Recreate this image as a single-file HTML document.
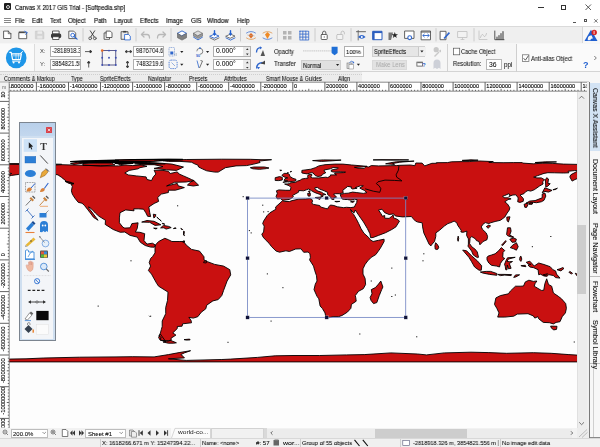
<!DOCTYPE html>
<html><head><meta charset="utf-8">
<style>
html,body{margin:0;padding:0;}
body{width:600px;height:447px;overflow:hidden;position:relative;background:#fff;-webkit-font-smoothing:antialiased;font-family:"Liberation Sans",sans-serif;color:#222;}
.a{position:absolute;}
.t{position:absolute;white-space:pre;line-height:1;}
.t,.it,.lb,.tb,.st,.vt{will-change:transform}
svg{position:absolute;overflow:visible;}
</style></head><body>
<!-- title bar -->
<div class="a" style="left:0;top:0;width:600px;height:14px;background:#fff"></div>
<div class="a" style="left:4px;top:3px;width:7px;height:7px;background:#1e1e1e;border-radius:1px"></div>
<div class="a" style="left:5.5px;top:4.5px;width:4px;height:4px;border:0.8px solid #ddd;border-radius:50%;box-sizing:border-box"></div>
<div class="t" style="left:15.2px;top:4.6px;font-size:6.6px;color:#000;transform:scaleX(0.9);transform-origin:0 0;-webkit-text-stroke:0.12px #000">Canvas X 2017 GIS Trial - [Softpedia.shp]</div>
<div class="a" style="left:538px;top:7px;width:6px;height:0.8px;background:#333"></div>
<div class="a" style="left:561px;top:4.5px;width:5px;height:5px;border:0.8px solid #333;box-sizing:border-box"></div>
<svg style="left:585px;top:4px" width="7" height="7"><path d="M0.5 0.5L6 6M6 0.5L0.5 6" stroke="#333" stroke-width="0.8"/></svg>
<!-- menu bar -->
<div class="a" style="left:4.2px;top:17.6px;width:6.6px;height:0.8px;background:#888;box-shadow:0 2px 0 #888,0 4px 0 #888"></div>
<div class="t" style="left:15.2px;top:17.8px;font-size:6.6px;color:#000;transform:scaleX(0.92);transform-origin:0 0;-webkit-text-stroke:0.12px #000">File</div>
<div class="t" style="left:32px;top:17.8px;font-size:6.6px;color:#000;transform:scaleX(0.92);transform-origin:0 0;-webkit-text-stroke:0.12px #000">Edit</div>
<div class="t" style="left:50.3px;top:17.8px;font-size:6.6px;color:#000;transform:scaleX(0.92);transform-origin:0 0;-webkit-text-stroke:0.12px #000">Text</div>
<div class="t" style="left:68.3px;top:17.8px;font-size:6.6px;color:#000;transform:scaleX(0.92);transform-origin:0 0;-webkit-text-stroke:0.12px #000">Object</div>
<div class="t" style="left:93.8px;top:17.8px;font-size:6.6px;color:#000;transform:scaleX(0.92);transform-origin:0 0;-webkit-text-stroke:0.12px #000">Path</div>
<div class="t" style="left:113.8px;top:17.8px;font-size:6.6px;color:#000;transform:scaleX(0.92);transform-origin:0 0;-webkit-text-stroke:0.12px #000">Layout</div>
<div class="t" style="left:140px;top:17.8px;font-size:6.6px;color:#000;transform:scaleX(0.92);transform-origin:0 0;-webkit-text-stroke:0.12px #000">Effects</div>
<div class="t" style="left:166px;top:17.8px;font-size:6.6px;color:#000;transform:scaleX(0.92);transform-origin:0 0;-webkit-text-stroke:0.12px #000">Image</div>
<div class="t" style="left:190.5px;top:17.8px;font-size:6.6px;color:#000;transform:scaleX(0.92);transform-origin:0 0;-webkit-text-stroke:0.12px #000">GIS</div>
<div class="t" style="left:206.5px;top:17.8px;font-size:6.6px;color:#000;transform:scaleX(0.92);transform-origin:0 0;-webkit-text-stroke:0.12px #000">Window</div>
<div class="t" style="left:236.5px;top:17.8px;font-size:6.6px;color:#000;transform:scaleX(0.92);transform-origin:0 0;-webkit-text-stroke:0.12px #000">Help</div>
<div class="a" style="left:572.5px;top:22px;width:3.5px;height:0.8px;background:#555"></div>
<div class="a" style="left:583.5px;top:18.5px;width:3.5px;height:3.5px;border:0.7px solid #555;box-sizing:border-box"></div>
<svg style="left:593.5px;top:18.5px" width="4" height="4"><path d="M0.2 0.2L3.6 3.6M3.6 0.2L0.2 3.6" stroke="#444" stroke-width="0.7"/></svg>
<!-- toolbar -->
<div class="a" style="left:0;top:25.5px;width:600px;height:18px;background:#efefef;border-top:1px solid #dadada;border-bottom:1px solid #d2d2d2;box-sizing:border-box"></div>
<div class="a" style="left:582px;top:26.5px;width:18px;height:16px;background:#f7f7f7;border-left:1px solid #d8d8d8;box-sizing:border-box"></div>
<svg style="left:0;top:0" width="600" height="50">
<g stroke-linejoin="round" stroke-linecap="round">
<!-- separators -->
<g stroke="#c4c4c4" stroke-width="0.8">
<path d="M83 28.5V41M136 28.5V41M171 28.5V41M240.5 28.5V41M277.5 28.5V41M315 28.5V41M351 28.5V41M436 28.5V41M474 28.5V41"/>
</g>
<!-- new doc -->
<g transform="translate(3.5,30.7)"><path d="M0.5 0.4H4.8L7.4 3V7.8H0.5Z" fill="#fff" stroke="#3d3d3d" stroke-width="0.8"/><path d="M4.8 0.4V3H7.4" fill="none" stroke="#3d3d3d" stroke-width="0.7"/></g>
<!-- new from template -->
<g transform="translate(18.7,30.7)"><path d="M0.5 2H8V8H0.5Z" fill="#fff" stroke="#3d3d3d" stroke-width="0.8"/><path d="M0.5 1.4H5.5" stroke="#3d3d3d" stroke-width="1.2"/><path d="M6 0.6L8.6 1.8L7 3.6" fill="none" stroke="#1f5fd0" stroke-width="0.9"/></g>
<!-- save disabled -->
<g transform="translate(35.5,30.8)"><path d="M0.3 0.3H7.2L8.3 1.4V8H0.3Z" fill="#d4d4d4" stroke="#c2c2c2" stroke-width="0.6"/><path d="M2 0.5H6.5V3H2Z" fill="#ececec"/><path d="M1.8 5H6.8V7.8H1.8Z" fill="#e8e8e8"/></g>
<!-- print -->
<g transform="translate(50.7,30.5)"><path d="M2.2 0.5H8.4V3.5H2.2Z" fill="#fff" stroke="#3a3a3a" stroke-width="0.8"/><rect x="0.3" y="3" width="10.2" height="4.6" rx="1.6" fill="#3a3a3a"/><path d="M2.3 6.2H8.3V9H2.3Z" fill="#fff" stroke="#3a3a3a" stroke-width="0.8"/></g>
<!-- print preview -->
<g transform="translate(68.7,30.7)"><path d="M0.5 0.4H5L7 2.4V7.9H0.5Z" fill="#fff" stroke="#3d3d3d" stroke-width="0.8"/><circle cx="4" cy="4.5" r="1.9" fill="#fff" stroke="#1f5fd0" stroke-width="0.9"/><path d="M5.4 5.9L8.4 8.4" stroke="#1f5fd0" stroke-width="1.2"/></g>
<!-- cut -->
<g transform="translate(88,30.5)"><path d="M2.3 0.3L6.3 6.5M6.7 0.3L2.7 6.5" stroke="#333" stroke-width="0.9"/><circle cx="2.2" cy="7.8" r="1.4" fill="none" stroke="#555" stroke-width="0.9"/><circle cx="6.8" cy="7.8" r="1.4" fill="none" stroke="#555" stroke-width="0.9"/></g>
<!-- copy -->
<g transform="translate(104,30.7)"><path d="M0.5 2.2H5.5V8.6H0.5Z" fill="#fff" stroke="#3d3d3d" stroke-width="0.8"/><path d="M2.5 0.4H6.3L8 2.1V6.8H2.5Z" fill="#fff" stroke="#3d3d3d" stroke-width="0.8"/></g>
<!-- paste -->
<g transform="translate(121,30.5)"><path d="M0.5 1.2H7V8.8H0.5Z" fill="#e8e8e8" stroke="#3d3d3d" stroke-width="0.8"/><path d="M2.2 0.4H5.3V2H2.2Z" fill="#3d3d3d"/><path d="M4 4H7.6L9.3 5.7V9.4H4Z" fill="#fff" stroke="#1f5fd0" stroke-width="0.8"/></g>
<!-- undo/redo grey -->
<g transform="translate(140.5,31)" fill="none" stroke="#b8b8b8" stroke-width="1.3"><path d="M1 3.5H6.5Q9 3.5 9 7"/><path d="M3.5 1L1 3.5L3.5 6"/></g>
<g transform="translate(156.5,31)" fill="none" stroke="#b8b8b8" stroke-width="1.3"><path d="M9 3.5H3.5Q1 3.5 1 7"/><path d="M6.5 1L9 3.5L6.5 6"/></g>
<!-- layers icons -->
<g transform="translate(177,30.5)"><path d="M0.5 2.8L5 0.4L9.5 2.8L5 5.2Z" fill="#fff" stroke="#2b63c8" stroke-width="0.9"/><path d="M0.5 3V7.2L5 9.6L9.5 7.2V3L5 5.4Z" fill="#808080" stroke="#5d5d5d" stroke-width="0.6"/></g>
<g transform="translate(193,30.5)"><path d="M0.5 2.8L5 0.4L9.5 2.8L5 5.2Z" fill="#ddd" stroke="#707070" stroke-width="0.7"/><path d="M0.5 3V5.5L5 8L9.5 5.5V3L5 5.4Z" fill="#9a9a9a" stroke="#6a6a6a" stroke-width="0.6"/><path d="M0.5 6.6L5 9.4L9.5 6.6" fill="none" stroke="#2b63c8" stroke-width="0.9"/></g>
<g transform="translate(209.5,30.5)"><path d="M0.5 5.6L5 3.6L9.5 5.6L5 7.6Z" fill="#fff" stroke="#2b63c8" stroke-width="0.9"/><path d="M0.5 7.4L5 9.6L9.5 7.4" fill="none" stroke="#555" stroke-width="0.8"/><path d="M5 0.3V4.6" stroke="#1f5fd0" stroke-width="1.4"/><path d="M3.2 2.8L5 4.9L6.8 2.8Z" fill="#1f5fd0"/></g>
<g transform="translate(225.5,30.5)"><path d="M0.5 5.6L5 3.6L9.5 5.6L5 7.6Z" fill="#fff" stroke="#555" stroke-width="0.8"/><path d="M0.5 7.4L5 9.6L9.5 7.4" fill="none" stroke="#2b63c8" stroke-width="0.9"/><path d="M5 0.3V4.6" stroke="#1f5fd0" stroke-width="1.4"/><path d="M3.2 2.8L5 4.9L6.8 2.8Z" fill="#1f5fd0"/></g>
<g transform="translate(246,30.5)"><path d="M0.5 2.5Q5 -0.5 9.5 2.5" fill="none" stroke="#5a86d6" stroke-width="0.9"/><path d="M0.5 7.5Q5 10.5 9.5 7.5" fill="none" stroke="#e0a060" stroke-width="0.9"/><path d="M5 2.5L7.5 5L5 8L2.5 5Z" fill="#e06a20"/><path d="M1.5 4.5L8.5 5.5" stroke="#aaa" stroke-width="0.5"/></g>
<g transform="translate(262.5,30.5)"><path d="M0.5 2.5Q5 -0.5 9.5 2.5" fill="none" stroke="#e0a060" stroke-width="0.9"/><path d="M0.5 7.5Q5 10.5 9.5 7.5" fill="none" stroke="#5a86d6" stroke-width="0.9"/><path d="M5 1.5L7.5 4L5 8.5L2.5 4Z" fill="#ef8a25"/></g>
<!-- grid icons -->
<g transform="translate(283,31)" fill="#b4b4b4"><rect x="0" y="0" width="3.5" height="3.5"/><rect x="5" y="0" width="3.5" height="3.5"/><rect x="0" y="5" width="3.5" height="3.5"/><rect x="5" y="5" width="3.5" height="3.5"/></g>
<g transform="translate(299.5,30.8)" fill="none" stroke="#2f66cc" stroke-width="0.8" stroke-dasharray="1.1 0.7"><rect x="0.4" y="0.4" width="8.8" height="8.8"/><path d="M3.3 0.4V9.2M6.3 0.4V9.2M0.4 3.3H9.2M0.4 6.3H9.2"/></g>
<!-- lock/unlock -->
<g transform="translate(320,30.5)"><path d="M2.5 4V2.6Q2.5 0.6 4.2 0.6Q5.9 0.6 5.9 2.6V4" fill="none" stroke="#555" stroke-width="0.9"/><rect x="1.2" y="4" width="6" height="5" rx="0.6" fill="#fff" stroke="#555" stroke-width="0.9"/><rect x="3.8" y="5.8" width="0.8" height="1.4" fill="#555"/></g>
<g transform="translate(336,30.5)"><path d="M5 4V2.6Q5 0.6 6.7 0.6Q8.4 0.6 8.4 2.6V3.4" fill="none" stroke="#bdbdbd" stroke-width="0.9"/><rect x="0.8" y="4" width="6" height="5" rx="0.6" fill="#f4f4f4" stroke="#bdbdbd" stroke-width="0.9"/></g>
<!-- eye with lines -->
<g transform="translate(356,30.5)"><path d="M0.5 1.2H9.5" stroke="#555" stroke-width="0.9"/><path d="M2.2 0V9.5" stroke="#555" stroke-width="0.8"/><path d="M2 6.4Q5.8 2.6 9.6 6.4Q5.8 10 2 6.4Z" fill="#2f66cc"/><circle cx="5.8" cy="6.4" r="1" fill="#fff"/></g>
<!-- window -->
<g transform="translate(372.5,30.8)"><rect x="0.5" y="0.5" width="9" height="8.4" fill="#fff" stroke="#2d5fbf" stroke-width="1"/><rect x="0.5" y="0.5" width="9" height="1.8" fill="#2d5fbf"/><rect x="0.5" y="0.5" width="1.6" height="8.4" fill="#2d5fbf"/></g>
<!-- star -->
<g transform="translate(388,30.5)"><path d="M0.5 2H5L3 9.5H0.5Z" fill="#777"/><path d="M6.8 1.5L7.6 3.8H10L8.1 5.2L8.8 7.5L6.8 6.1L4.8 7.5L5.5 5.2L3.6 3.8H6Z" fill="#222"/></g>
<!-- page gear -->
<g transform="translate(404.5,30.5)"><rect x="0.5" y="0.5" width="9" height="7.4" fill="#fff" stroke="#555" stroke-width="0.9"/><circle cx="5.2" cy="7.2" r="1.9" fill="#fff" stroke="#2f66cc" stroke-width="1.1"/></g>
<!-- arrows window -->
<g transform="translate(421,30.5)"><rect x="0.5" y="0.5" width="9" height="8.8" fill="#fff" stroke="#555" stroke-width="0.9"/><path d="M0.5 1.5H9.5" stroke="#555" stroke-width="1.2"/><path d="M2 5H8" stroke="#2f66cc" stroke-width="0.9"/><path d="M3.3 3.6L1.8 5L3.3 6.4M6.7 3.6L8.2 5L6.7 6.4" fill="none" stroke="#2f66cc" stroke-width="0.9"/></g>
<!-- page pen -->
<g transform="translate(440,30.5)"><path d="M0.5 0.8H6V9.2H0.5Z" fill="#fff" stroke="#555" stroke-width="0.9"/><path d="M3.5 7.5L8.8 1.5L10 2.7L4.7 8.5Z" fill="#2f66cc"/></g>
<!-- monitor grey -->
<g transform="translate(457.5,31)"><rect x="0.5" y="0.5" width="9" height="6" fill="#f2f2f2" stroke="#c4c4c4" stroke-width="0.9"/><path d="M3.5 8.5H6.5M5 6.5V8.5" stroke="#c4c4c4" stroke-width="0.8"/></g>
<!-- chart pen grey -->
<g transform="translate(478,30.5)"><path d="M1 0.5V9H9" fill="none" stroke="#c2c2c2" stroke-width="0.8"/><path d="M2.5 7Q4 2 5.5 5T8.5 3" fill="none" stroke="#c2c2c2" stroke-width="0.9"/></g>
<!-- bar chart -->
<g transform="translate(494,30.5)"><path d="M0.8 0.5V9.2H10" fill="none" stroke="#444" stroke-width="0.9"/><path d="M3 9V6.5M5 9V5M7 9V3M9 9V1" stroke="#444" stroke-width="1.1"/></g>
<!-- logo -->
<g transform="translate(584,29)"><path d="M0.5 12L7 0.8L13.5 12Z" fill="#1f5fd0"/><path d="M3.7 11.2Q3.5 6.5 7.5 6.3L9 9.5Q6.2 9.2 6.5 11.2Z" fill="#f7f7f7"/><circle cx="10.2" cy="3.5" r="2.7" fill="#d42020"/><path d="M10.1 2.2V4.8" stroke="#fff" stroke-width="0.8"/></g>
</g>
</svg>

<!-- property bar -->
<div class="a" style="left:0;top:43.3px;width:600px;height:28.6px;background:#f6f6f6;border-bottom:1px solid #d4d4d4;box-sizing:border-box"></div>
<style>
.inp{position:absolute;background:#fff;border:1px solid #b0b0b0;box-sizing:border-box;overflow:hidden}
.it{position:absolute;white-space:pre;line-height:1;font-size:6px;color:#000;transform-origin:0 0;-webkit-text-stroke:0.04px #000}
.lb{position:absolute;white-space:pre;line-height:1;font-size:6.3px;color:#111;transform-origin:0 0;-webkit-text-stroke:0.05px #000}
.dd{position:absolute;background:#e3e3e3;border:1px solid #cfcfcf;box-sizing:border-box}
</style>
<div class="a" style="left:0;top:43.8px;width:33.5px;height:27.3px;background:#fafafa"></div>
<div class="a" style="left:33.5px;top:44px;width:0.8px;height:27px;background:#dcdcdc"></div>
<div class="a" style="left:447px;top:44px;width:0.9px;height:27.5px;background:#d2d2d2"></div>
<div class="a" style="left:516.3px;top:44px;width:0.9px;height:27.5px;background:#cfcfcf"></div>
<div class="a" style="left:517.3px;top:43.8px;width:83px;height:27.3px;background:#fafafa"></div>
<svg style="left:0;top:0" width="600" height="75">
<circle cx="16.2" cy="57.9" r="10.3" fill="#1e96e8"/>
<g fill="none" stroke="#fff" stroke-linecap="round" stroke-linejoin="round">
<path d="M9.8 52.3H11.2L12.6 59.6H20.3L21.4 53.8H11.7" stroke-width="1.2"/>
<path d="M20.6 53.2L22.6 51.6" stroke-width="1"/>
<path d="M13.2 55.8H20.6M16 53.8V59.6M18.4 53.8V59.6" stroke-width="0.6"/>
<path d="M12.5 61.2H20.2" stroke-width="0.9"/>
</g>
<circle cx="13.6" cy="62.5" r="1" fill="#fff"/><circle cx="19" cy="62.5" r="1" fill="#fff"/>
<!-- arrows -->
<g stroke="#333" stroke-width="0.8" fill="#333">
<path d="M85 51.6H90.6" fill="none"/><path d="M90 50.3L92 51.6L90 52.9Z"/>
<path d="M88.7 67.5V62.5" fill="none"/><path d="M87.4 63L88.7 61L90 63Z"/>
<path d="M126.5 51.6H130.5" fill="none"/><path d="M126.8 50.4L125 51.6L126.8 52.8ZM130.2 50.4L132 51.6L130.2 52.8Z"/>
<path d="M127.5 62.5V66.5" fill="none"/><path d="M126.3 62.8L127.5 61L128.7 62.8ZM126.3 66.2L127.5 68L128.7 66.2Z"/>
</g>
<!-- ref point box -->
<rect x="102.2" y="50.6" width="13.6" height="14.4" fill="none" stroke="#2a2a6a" stroke-width="0.75"/>
<g fill="#3d4fb0">
<circle cx="109" cy="50.6" r="0.95"/><circle cx="115.8" cy="50.6" r="0.95"/>
<circle cx="102.2" cy="57.8" r="0.95"/><circle cx="109" cy="57.8" r="0.95"/><circle cx="115.8" cy="57.8" r="0.95"/>
<circle cx="102.2" cy="65" r="0.95"/><circle cx="109" cy="65" r="0.95"/><circle cx="115.8" cy="65" r="0.95"/>
</g>
<circle cx="102.2" cy="50.6" r="1.3" fill="#e8702a"/>
<!-- align icons -->
<g transform="translate(168.5,47)"><rect x="0.5" y="0.5" width="5.5" height="8.5" rx="0.5" fill="none" stroke="#6d8fd0" stroke-width="0.7" stroke-dasharray="1 0.6"/><rect x="1.8" y="4.5" width="3" height="3" fill="#2f66cc"/><path d="M6.5 6V9M8 6V9" stroke="#9ab" stroke-width="0.5"/></g>
<g transform="translate(168.5,59.5)"><rect x="0.6" y="0.6" width="8" height="8.5" rx="2" fill="none" stroke="#2f66cc" stroke-width="0.8" stroke-dasharray="1.4 0.8"/><path d="M3 3L6.5 6.5" stroke="#5580d0" stroke-width="0.6"/></g>
<g transform="translate(195.5,46.8)"><path d="M1.3 4.5A3 3 0 1 1 4.5 7.5" fill="none" stroke="#555" stroke-width="0.7"/><circle cx="4.5" cy="1.3" r="0.9" fill="#2f66cc"/><text x="0.5" y="9.8" font-size="3.6" fill="#2f66cc" font-family="Liberation Sans" font-weight="bold">90</text></g>
<g transform="translate(195.5,59.5)" fill="none" stroke-width="0.8"><path d="M1.5 1L3.5 8.5" stroke="#2f66cc"/><path d="M5 1L7 1.5L4 8.5" stroke="#555"/></g>
<g fill="#222"><path d="M180.2 51L183.4 51L181.8 52.9Z"/><path d="M180.2 63.8L183.4 63.8L181.8 65.7Z"/><path d="M206 51L209.2 51L207.6 52.9Z"/><path d="M206 63.8L209.2 63.8L207.6 65.7Z"/><path d="M356.8 63.8L360 63.8L358.4 65.7Z"/></g>
<!-- blue curved arrows -->
<g transform="translate(255.5,46.5)"><path d="M1 6Q1 1.5 5 1.2" fill="none" stroke="#2f66cc" stroke-width="1.3"/><path d="M4.4 -0.3L6.6 1.3L4.4 3Z" fill="#2f66cc"/><path d="M5 9.5L7.5 3.5L9.5 9.5Z" fill="#555"/></g>
<g transform="translate(255.5,59.5)"><path d="M1.2 9Q1 3.5 7 3" fill="none" stroke="#2f66cc" stroke-width="1.4"/><path d="M1.5 7.5L3 9.8L4.5 7.5Z" fill="#2f66cc"/><path d="M5 4L9.5 1V5Z" fill="#444"/></g>
<!-- slider -->
<path d="M303 50.8H333" stroke="#d0d0d0" stroke-width="1.2" stroke-dasharray="1.5 0.6"/>
<path d="M331.6 46.8H337.6V53L334.6 55.3L331.6 53Z" fill="#1f6fd6"/>
<!-- make lens misc icons -->
<g transform="translate(416.5,61.5)"><rect x="0.4" y="0.6" width="5.5" height="4" fill="#fff" stroke="#555" stroke-width="0.8"/><path d="M1 1.2H5.5" stroke="#555" stroke-width="0.8"/><text x="5.8" y="5.5" font-size="5.5" fill="#2f66cc" font-family="Liberation Sans" font-weight="bold">?</text></g>
<g transform="translate(432,46.5)" fill="#c9c9c9"><path d="M2 9.5L6.5 5L7.5 6L3 10.5Z"/><circle cx="4.2" cy="3.2" r="2.6"/><path d="M6.5 4.5L9 3V6Z"/></g>
<g transform="translate(432.5,59)"><path d="M1 10V4A3.5 3.5 0 0 1 8 4V10L6.5 8.8L4.5 10L2.5 8.8Z" fill="#cdd0d8"/></g>
<!-- checkboxes -->
<rect x="453.5" y="48.2" width="6.2" height="6.6" fill="#fff" stroke="#555" stroke-width="0.7"/>
<rect x="522.5" y="54.8" width="6.4" height="6.6" fill="#fff" stroke="#666" stroke-width="0.7"/>
<path d="M523.6 58.2L525.4 60.2L528.5 55.6" fill="none" stroke="#333" stroke-width="0.8"/>
<path d="M594.3 56L596.3 58L594.3 60" fill="none" stroke="#444" stroke-width="0.7"/>
</svg>
<!-- inputs -->
<div class="inp" style="left:49.8px;top:46px;width:31.5px;height:10.6px"><div class="it" style="left:1.4px;top:1.4px;font-size:6.8px;transform:scaleX(0.85)">-2818918.326</div></div>
<div class="inp" style="left:49.8px;top:59.2px;width:31.5px;height:10.4px"><div class="it" style="left:1.4px;top:1.3px;font-size:6.8px;transform:scaleX(0.85)">3854821.556</div></div>
<div class="inp" style="left:133.3px;top:46px;width:31px;height:10.6px"><div class="it" style="left:1.4px;top:1.4px;font-size:6.8px;transform:scaleX(0.85)">9876704.652</div></div>
<div class="inp" style="left:133.3px;top:59.2px;width:31px;height:10.4px"><div class="it" style="left:1.4px;top:1.3px;font-size:6.8px;transform:scaleX(0.85)">7483219.681</div></div>
<div class="inp" style="left:213.3px;top:46px;width:37.5px;height:10.6px;background:linear-gradient(90deg,#fff 80%,#eaeaea 80%)"><div class="it" style="left:1.6px;top:1.4px;font-size:6.8px;transform:scaleX(1.0)">0.000°</div></div>
<div class="inp" style="left:213.3px;top:59.2px;width:37.5px;height:10.4px;background:linear-gradient(90deg,#fff 80%,#eaeaea 80%)"><div class="it" style="left:1.6px;top:1.3px;font-size:6.8px;transform:scaleX(1.0)">0.000°</div></div>
<div class="inp" style="left:343.7px;top:46px;width:20px;height:10.6px"><div class="it" style="left:1.8px;top:2px;font-size:6.1px;transform:scaleX(0.95)">100%</div></div>
<div class="inp" style="left:485.8px;top:59.2px;width:16px;height:11px;border-color:#b8b8b8"><div class="it" style="left:2.4px;top:1.8px;font-size:6.8px">36</div></div>
<div class="dd" style="left:371.7px;top:46px;width:53.3px;height:10.7px;background:#e6e6e6"><div class="it" style="left:1.8px;top:1.6px;font-size:6.6px;transform:scaleX(0.86)">SpriteEffects</div><div class="a" style="left:45.5px;top:0;width:6.8px;height:8.7px;background:#f0f0f0;border-left:0.8px solid #c8c8c8"></div></div>
<div class="dd" style="left:300.8px;top:60px;width:40px;height:9.6px;background:#e1e1e1"><div class="it" style="left:1.6px;top:1.6px;font-size:6.3px;transform:scaleX(0.9)">Normal</div></div>
<div class="dd" style="left:371.7px;top:59.5px;width:35.8px;height:10px;background:#e2e2e2;border-color:#dadada"><div class="it" style="left:3.4px;top:1.6px;font-size:6.4px;color:#a8a8a8;-webkit-text-stroke:0;transform:scaleX(0.92)">Make Lens</div></div>
<svg style="left:0;top:0" width="600" height="75"><g fill="#222"><path d="M336 64L339.2 64L337.6 65.9Z"/><path d="M420.3 50.5L423.5 50.5L421.9 52.4Z"/></g></svg>
<!-- labels -->
<div class="lb" style="left:40.3px;top:48.8px;font-size:5.8px;color:#333;-webkit-text-stroke:0">X:</div>
<div class="lb" style="left:40.3px;top:61.8px;font-size:5.8px;color:#333;-webkit-text-stroke:0">Y:</div>
<div class="lb" style="left:274.2px;top:49px;transform:scaleX(0.92)">Opacity</div>
<div class="lb" style="left:274.2px;top:61px;transform:scaleX(0.95)">Transfer</div>
<div class="lb" style="left:461.3px;top:48.6px;transform:scaleX(0.9)">Cache Object</div>
<div class="lb" style="left:453px;top:61.3px;transform:scaleX(0.9)">Resolution:</div>
<div class="lb" style="left:504px;top:61.5px">ppi</div>
<div class="lb" style="left:530.5px;top:55.5px;transform:scaleX(0.9)">Anti-alias Object</div>
<div class="lb" style="left:583.3px;top:61px;font-size:9px;font-weight:bold;color:#1f5fd0;-webkit-text-stroke:0">?</div>
<svg style="left:0;top:0" width="600" height="75"><!-- spinners -->
<g fill="#333"><path d="M246 50L247.3 48.3L248.6 50Z"/><path d="M246 53.6L247.3 55.3L248.6 53.6Z"/><path d="M246 63.3L247.3 61.6L248.6 63.3Z"/><path d="M246 66.9L247.3 68.6L248.6 66.9Z"/></g>
</svg>
<svg style="left:0;top:0" width="600" height="75"><g transform="translate(346.5,60.5)"><rect x="0.5" y="2.5" width="5" height="5.5" fill="#ddd" stroke="#777" stroke-width="0.6"/><rect x="2.5" y="4" width="4.5" height="4.5" fill="#fff" stroke="#777" stroke-width="0.5"/><path d="M3 2Q5 -0.5 7.5 2" fill="none" stroke="#2f66cc" stroke-width="0.8"/><path d="M6.5 1L8 2.5L6.2 3Z" fill="#2f66cc"/></g></svg>

<!-- tabs -->
<div class="a" style="left:0;top:71.9px;width:600px;height:10.1px;background:#f7f7f7"></div>
<div class="a" style="left:0;top:71.9px;width:362px;height:10.1px;background:#ececec"></div>
<style>.tb{position:absolute;white-space:pre;line-height:1;font-size:6.4px;color:#000;transform-origin:0 0;transform:scaleX(0.845);top:75.8px;-webkit-text-stroke:0.05px #000}</style>
<div class="a" style="left:0;top:73.5px;width:362px;height:0;border-top:0.6px dotted #cfcfcf"></div>
<div class="tb" style="left:4px">Comments &amp; Markup</div>
<div class="tb" style="left:71px">Type</div>
<div class="tb" style="left:100px">SpriteEffects</div>
<div class="tb" style="left:148px">Navigator</div>
<div class="tb" style="left:189px">Presets</div>
<div class="tb" style="left:224px">Attributes</div>
<div class="tb" style="left:266px">Smart Mouse &amp; Guides</div>
<div class="tb" style="left:338px">Align</div>

<!-- canvas -->
<div class="a" style="left:9px;top:91px;width:568px;height:337px;background:#fdfdfd"></div>
<svg style="left:0;top:0" width="600" height="447">
<defs><clipPath id="cv"><rect x="9" y="91.5" width="568" height="337"/></clipPath></defs>
<g clip-path="url(#cv)">
<path d="M-6.1 167.6L-2.9 165.3L2.8 164.5L13.9 163.9L22.4 164.2L38.4 164.6L49.1 165.3L61.6 164.7L72.3 165.0L88.3 165.4L100.7 165.9L118.5 165.9L125.7 165.0L132.8 165.6L141.7 165.0L147.0 166.3L139.9 167.7L138.1 168.8L129.2 170.4L124.8 173.0L128.3 174.9L136.3 175.9L146.1 176.9L147.0 179.5L151.5 180.6L153.3 176.9L155.9 174.0L154.1 170.2L163.0 170.4L168.4 171.3L170.2 173.5L177.3 171.9L179.1 174.0L183.5 175.9L191.5 179.5L193.8 180.6L186.2 182.0L174.6 182.3L166.6 186.0L177.3 183.4L178.2 185.8L184.4 187.6L175.5 190.2L168.4 190.2L168.4 192.5L161.3 194.1L157.7 197.5L158.6 201.4L154.1 203.5L148.8 207.0L149.7 212.3L150.6 216.6L147.6 216.3L145.8 212.7L143.5 209.2L138.1 208.8L133.7 208.9L134.0 210.8L125.7 209.9L120.0 212.7L119.4 217.9L119.4 222.8L123.0 227.3L124.8 228.1L130.1 227.8L131.9 223.6L138.1 222.8L137.2 228.6L135.4 232.0L139.9 232.3L144.7 233.7L144.0 240.6L147.0 244.1L152.4 243.2L155.4 245.0L154.3 247.2L150.6 247.1L145.2 245.5L140.4 242.3L137.2 237.1L130.1 235.4L124.8 232.0L120.3 232.3L113.2 229.5L105.2 224.4L105.5 220.3L99.0 216.3L95.4 213.1L91.8 209.2L88.6 206.8L89.2 208.5L92.7 213.1L96.3 217.9L98.1 220.3L93.6 217.4L90.1 212.7L87.4 209.2L84.5 205.5L82.0 203.2L78.3 202.4L74.9 198.2L72.3 194.1L71.4 190.8L72.3 186.4L71.0 184.1L74.0 183.4L66.9 181.7L61.6 177.4L58.0 174.9L50.9 173.5L43.8 172.1L33.1 171.4L25.1 172.6L18.8 174.4L11.7 175.4L3.7 177.2L11.7 173.5L4.6 172.3L-0.7 171.3L0.2 169.6L6.4 168.4L-1.6 168.4ZM155.4 245.0L158.6 241.5L164.8 238.3L168.4 239.7L171.9 241.5L179.1 241.5L183.5 241.5L186.2 245.0L191.5 249.4L199.5 251.1L204.0 256.8L204.0 259.9L207.5 261.7L214.7 264.4L223.6 266.1L229.8 269.7L230.7 274.9L227.1 281.0L223.6 290.4L221.8 295.5L218.2 299.6L212.9 300.9L206.7 305.2L205.8 308.8L201.3 312.2L197.8 316.7L193.3 318.1L188.9 317.4L191.0 320.3L191.5 322.8L182.6 323.8L182.1 326.2L177.3 326.5L177.3 328.5L172.8 332.9L175.9 335.1L171.1 338.2L171.2 340.2L168.4 340.7L160.4 340.4L158.6 337.6L160.4 332.9L161.3 329.7L162.2 326.5L162.2 321.0L165.7 313.7L165.7 307.6L167.5 300.4L168.0 292.1L158.6 286.2L156.8 283.6L151.5 274.1L148.4 270.5L150.6 266.1L149.2 262.6L150.6 258.5L152.7 256.4L155.0 252.9L155.0 247.6ZM170.9 340.5L176.4 342.8L173.7 343.2L168.4 343.2L163.0 342.0L166.6 341.3ZM282.7 200.6L275.6 207.0L275.9 209.2L269.9 212.8L267.2 215.5L263.6 221.1L262.7 223.6L264.2 226.1L263.6 232.0L261.8 234.2L263.1 237.1L265.4 239.7L269.0 243.2L271.6 246.7L276.1 251.1L279.6 252.2L285.9 250.8L289.4 251.5L295.7 249.0L301.0 248.8L303.7 252.3L308.1 252.0L309.9 253.8L310.4 257.3L309.6 259.9L313.5 266.1L314.7 270.5L316.5 275.8L317.0 281.0L315.3 284.1L314.0 289.6L317.0 296.3L318.8 298.8L320.1 306.0L322.4 308.5L325.0 312.9L325.8 316.7L328.6 317.8L333.1 316.7L338.4 316.7L342.0 315.5L347.3 312.2L350.9 308.3L351.4 304.4L356.2 301.2L355.8 297.9L355.3 295.5L358.5 291.3L363.3 288.7L365.6 284.5L365.1 278.4L363.0 274.1L363.0 268.8L365.1 264.4L367.8 260.8L371.3 257.3L375.8 254.6L380.2 248.5L384.1 241.5L384.1 239.2L378.5 240.3L373.1 241.5L370.1 239.7L368.7 237.5L363.9 233.2L361.0 228.6L358.7 223.6L356.2 218.7L353.5 214.2L351.7 212.3L350.5 209.4L353.9 213.1L355.3 210.0L358.9 215.5L363.5 222.0L367.4 228.6L369.9 233.7L370.6 237.7L373.1 237.5L378.5 235.4L385.6 232.7L391.8 229.5L395.9 226.9L399.5 221.1L397.1 219.2L393.6 217.9L393.2 215.0L391.8 216.3L389.1 218.4L384.7 218.2L384.7 215.5L382.4 216.3L381.1 213.9L378.5 210.0L382.0 209.2L384.7 212.7L389.1 214.5L393.6 213.9L395.4 216.0L402.5 216.9L411.4 216.5L413.2 218.7L415.5 221.1L417.6 222.0L422.2 222.8L422.6 226.9L423.8 232.9L426.2 238.0L429.2 244.4L431.0 245.8L432.2 244.1L434.5 241.5L435.8 236.3L435.8 232.9L439.5 230.3L444.3 226.1L447.9 223.6L450.9 222.6L454.1 221.1L456.8 222.8L457.7 225.3L461.2 230.3L460.9 232.0L463.0 232.3L466.9 231.2L466.6 235.4L468.4 238.9L468.4 244.1L468.0 246.2L471.6 251.1L473.3 255.0L477.3 257.6L478.5 257.3L477.3 252.0L474.9 249.0L471.9 246.9L469.6 243.6L470.1 238.3L471.6 236.5L475.5 238.9L476.4 240.6L479.0 241.5L479.9 244.8L483.1 241.5L487.0 239.7L487.6 236.3L486.2 232.9L482.6 229.5L481.3 226.9L482.8 224.4L485.3 222.6L488.8 223.6L490.6 222.8L495.1 221.5L500.4 220.3L504.8 217.1L506.6 213.9L509.3 210.0L509.8 207.7L507.5 204.0L504.8 201.8L508.1 199.6L511.1 198.9L508.1 197.8L504.0 197.8L502.7 196.1L504.8 195.5L508.9 193.7L510.2 195.9L508.8 196.4L512.9 195.0L515.9 194.8L518.2 197.9L517.7 201.8L520.0 202.4L523.2 201.4L523.5 198.9L521.8 196.8L520.0 195.0L523.9 193.7L525.7 191.7L528.0 190.5L530.7 191.1L534.2 189.8L539.6 186.0L543.1 184.0L542.6 181.7L544.7 179.8L541.3 177.9L536.9 177.9L533.7 177.1L537.8 175.6L544.0 173.4L547.9 172.7L554.7 172.8L563.6 173.0L568.9 172.8L568.0 171.3L574.3 170.6L578.7 170.6L572.0 174.1L570.7 174.9L569.8 176.9L572.1 181.1L575.0 179.5L577.8 178.4L581.4 175.9L583.7 174.1L581.4 174.0L585.0 172.3L588.5 171.9L595.6 172.1L600.1 171.3L609.0 170.0L611.7 170.2L617.0 168.1L617.0 165.3L606.3 164.8L595.6 164.7L590.3 165.0L577.8 164.4L563.6 164.1L552.9 163.4L542.2 163.2L533.3 163.8L522.7 163.1L522.3 162.6L513.7 162.6L503.1 162.7L492.4 162.6L488.8 162.4L493.3 161.6L479.9 161.0L471.0 161.4L469.2 161.6L462.1 161.6L451.4 161.8L447.5 162.6L436.3 162.7L436.7 163.3L431.9 163.3L424.7 165.9L422.1 163.1L415.8 163.0L414.9 165.7L410.5 165.0L399.8 165.3L396.3 165.6L390.9 165.7L378.5 165.9L371.3 165.6L368.7 167.0L366.0 166.6L364.2 168.4L358.0 168.1L354.4 167.3L361.5 167.0L366.9 166.3L351.7 165.0L342.8 164.1L334.8 164.1L325.0 164.7L318.8 165.9L315.3 167.7L310.8 169.2L301.9 170.4L301.9 173.0L302.8 173.2L307.2 173.9L311.7 172.6L313.1 173.0L315.3 175.6L317.9 176.5L321.5 175.9L322.4 174.4L325.9 172.6L324.2 171.3L324.2 170.0L330.4 168.8L333.1 167.5L338.4 167.9L337.5 168.8L331.3 170.0L331.3 171.5L333.9 172.1L340.2 171.8L345.5 172.1L343.7 172.6L334.8 172.9L334.8 174.1L336.6 174.9L330.4 174.9L330.4 176.1L327.7 177.6L325.9 177.2L318.8 177.9L312.6 177.9L310.4 176.9L311.7 175.9L311.7 174.2L308.1 174.9L307.6 176.4L308.1 178.1L305.5 178.4L301.9 179.0L300.1 180.3L297.5 181.1L295.7 182.3L290.3 182.8L289.6 183.9L284.6 184.0L289.4 185.8L290.9 187.6L290.3 190.3L285.9 190.3L278.8 189.9L276.4 190.8L277.3 193.4L276.1 196.4L277.3 198.9L280.5 198.6L282.3 200.1L283.4 200.3L289.4 199.4L291.8 198.1L293.4 196.4L292.5 195.5L298.7 192.1L298.7 190.5L303.7 190.8L306.4 189.8L308.7 189.0L311.7 190.8L314.4 192.4L317.9 193.7L321.1 194.8L321.1 197.2L323.3 196.1L322.4 194.8L325.9 194.6L323.3 193.4L321.5 192.2L317.9 191.1L314.9 188.9L314.9 187.8L317.4 187.4L319.7 189.1L324.2 190.8L327.7 192.4L327.5 194.4L330.4 196.8L331.6 199.2L333.9 199.6L333.9 197.5L336.6 197.2L333.6 194.1L335.7 193.7L339.3 193.7L343.2 192.8L342.8 190.2L345.5 188.2L347.7 186.4L351.7 187.0L350.9 187.9L352.6 189.0L357.1 188.2L355.3 187.6L360.6 185.8L363.3 185.8L359.8 188.0L361.5 189.1L364.2 190.3L366.9 192.6L363.3 193.4L356.2 192.5L352.6 192.1L348.2 193.2L344.6 193.4L340.2 194.4L340.7 196.1L342.0 198.9L344.6 199.5L347.3 199.5L350.9 200.2L354.4 199.2L357.1 199.6L356.7 202.5L355.3 205.0L354.4 207.0L350.9 207.6L346.4 207.3L343.7 207.7L337.5 206.8L333.9 205.5L330.4 205.0L328.6 207.0L327.7 208.8L325.9 208.5L320.6 207.0L319.7 205.5L313.5 204.4L311.7 203.2L312.6 201.1L311.7 199.2L309.9 198.5L305.5 198.9L298.3 199.2L292.1 200.6L289.4 201.6L284.1 201.4ZM163.0 160.7L175.5 160.1L186.2 159.5L221.8 159.2L250.3 159.3L261.0 159.7L271.6 159.7L259.2 161.1L260.1 162.5L253.8 164.1L246.7 165.6L236.0 165.9L225.4 167.7L218.2 172.1L214.7 172.1L206.7 170.8L202.2 168.8L198.6 167.0L197.8 165.0L195.1 164.1L191.5 162.2L180.0 161.4L168.4 161.4ZM183.5 167.0L179.1 169.2L176.4 170.4L166.6 169.8L154.1 168.4L163.0 166.6L154.1 164.7L141.7 164.7L134.6 163.8L150.6 162.6L159.5 163.1L171.9 164.1ZM182.6 159.5L168.4 159.3L139.9 159.7L129.2 160.1L136.3 161.1L150.6 161.4L157.7 160.6L177.3 159.9ZM82.9 165.3L100.7 165.9L115.0 165.0L111.4 163.0L97.2 163.0L82.9 163.5ZM70.5 163.6L77.6 162.2L88.3 162.5L74.0 164.4ZM129.2 161.4L150.6 161.6L150.6 162.2L129.2 162.2ZM84.7 161.6L106.1 161.8L107.9 162.2L84.7 162.2ZM115.0 162.7L122.1 163.0L127.4 163.5L120.3 164.7ZM115.0 160.2L129.2 159.8L139.9 159.9L125.7 160.8ZM104.3 160.8L111.4 160.6L116.8 161.0L107.9 161.2ZM193.8 180.5L198.6 185.2L193.3 186.0L187.4 185.1L191.0 181.7ZM282.9 182.3L295.7 181.1L296.0 179.3L293.0 178.4L289.8 176.4L289.4 174.4L287.7 173.4L284.1 173.4L281.8 175.4L284.1 176.9L287.7 177.9L285.0 178.6L284.1 180.5L287.7 180.8ZM282.3 180.0L282.3 177.4L279.6 176.6L275.2 177.7L275.2 180.5L278.8 180.6ZM252.9 168.8L250.3 167.7L253.8 167.0L264.5 167.0L269.0 168.0L266.3 168.6L259.7 169.3ZM312.6 160.6L323.3 159.9L341.1 160.1L332.2 160.8L321.5 161.4ZM385.6 163.8L390.9 162.7L396.3 161.8L414.1 161.1L399.8 162.2L392.7 163.5L394.5 164.4ZM462.1 160.4L471.0 159.8L478.1 160.2L471.0 160.6ZM535.1 162.5L545.8 161.8L556.5 161.9L542.2 162.7ZM435.2 249.0L434.9 245.8L435.6 242.7L437.6 244.8L438.8 247.2L437.9 249.2L436.3 249.5ZM526.0 203.2L529.8 201.1L535.1 200.6L542.2 197.8L542.2 194.1L544.9 193.0L545.8 196.1L544.0 200.3L541.3 201.8L536.5 202.7L533.3 202.4L528.9 203.2ZM542.2 192.8L544.9 187.8L552.0 190.4L548.5 192.1L544.9 191.4ZM524.1 204.3L527.1 203.2L528.0 204.7L526.6 207.4L524.8 207.3ZM528.9 204.3L529.8 203.1L532.8 203.0L532.1 204.3ZM545.8 187.0L545.4 180.0L546.7 177.7L548.5 179.0L547.9 183.4L550.2 183.7L547.6 186.4ZM507.0 220.7L506.8 217.1L510.0 216.8L508.4 222.0ZM486.3 226.6L488.8 225.1L490.6 225.9L488.1 228.3ZM506.6 234.6L507.5 227.8L510.5 227.8L511.1 231.2L509.7 235.1L513.7 237.1L512.9 237.5L507.7 235.8ZM510.2 247.6L512.9 245.0L516.4 242.7L518.2 246.7L516.4 250.2L513.7 248.8ZM509.8 239.2L512.0 242.3L515.5 242.0L516.4 239.2L513.7 238.0ZM501.6 245.1L505.7 240.6L506.1 241.5L502.7 245.5ZM487.0 257.3L488.1 256.1L491.5 255.0L495.1 253.8L498.6 250.8L501.3 247.6L504.8 250.6L503.1 252.3L502.7 257.3L504.8 258.5L502.2 260.8L500.4 263.5L499.5 267.0L496.8 266.1L491.5 265.3L488.8 263.0L487.0 259.9ZM462.7 250.1L466.6 250.8L471.7 255.9L477.3 260.8L481.7 265.8L481.3 270.2L479.0 270.2L474.6 267.0L471.4 261.4L468.9 257.3ZM480.3 272.0L486.2 271.4L490.6 271.4L496.8 273.5L496.8 275.3L489.7 274.4L482.6 273.0ZM505.7 269.7L505.2 266.1L504.5 264.4L506.3 259.9L507.5 257.8L515.2 257.3L508.4 259.1L507.0 261.4L509.3 261.7L512.5 261.5L509.3 263.5L511.1 268.3L508.4 268.8L507.3 265.1L507.0 269.8ZM497.7 274.4L500.4 275.6L504.8 275.1L511.1 275.6L511.6 274.6L504.0 274.4ZM513.7 277.4L515.5 274.9L519.6 274.8L515.9 276.9ZM526.2 262.3L529.8 261.2L534.2 266.0L538.7 263.0L544.0 264.5L550.2 266.7L552.9 269.7L555.6 270.9L556.5 274.1L560.0 278.1L555.6 277.6L553.3 275.5L548.5 274.6L547.2 276.3L544.0 276.0L540.5 274.2L538.7 274.8L538.1 269.7L533.7 267.7L529.8 267.0L528.0 264.9L531.0 264.4L528.0 263.8ZM557.0 269.7L560.0 268.8L562.7 267.6L564.0 268.4L560.9 270.9ZM520.0 256.9L520.9 256.1L521.8 259.1L520.9 261.4L519.6 259.9ZM520.9 265.6L525.3 265.3L525.9 266.7L521.8 266.1ZM380.8 281.0L382.9 287.0L381.7 289.6L379.3 295.5L376.8 302.6L373.5 303.6L371.0 300.4L370.1 297.6L372.0 293.8L371.3 289.6L375.4 287.6L378.5 284.1ZM141.7 222.1L147.0 220.5L154.1 221.3L160.9 224.8L155.0 225.4L149.7 222.3ZM160.6 227.9L163.4 225.4L168.7 226.4L171.2 227.6L166.1 229.1L163.9 227.8ZM153.6 228.1L157.2 228.3L155.9 229.0ZM173.4 228.6L176.2 228.3L175.1 227.8ZM65.1 181.4L70.5 182.3L73.3 184.1L69.0 183.4ZM315.1 197.5L320.8 197.1L319.9 199.4ZM307.6 193.4L310.4 193.4L310.1 196.1L308.1 196.1ZM308.3 191.4L309.9 190.8L309.7 192.9ZM334.8 201.4L339.8 201.4L336.6 201.9ZM350.5 201.8L354.4 200.9L353.2 202.4ZM550.6 326.1L557.0 326.3L556.5 329.4L553.8 329.9L551.5 328.2ZM184.0 339.6L189.7 339.1L190.1 339.9L186.2 340.1ZM552.9 189.8L557.4 188.2L555.6 189.5ZM610.8 164.1L613.4 163.8L617.0 164.1ZM153.3 214.2L155.9 214.7L155.0 217.1L153.8 217.9ZM156.8 217.1L158.6 218.7L161.3 221.1L159.5 219.5ZM162.2 223.3L163.9 223.6L164.8 224.3L162.5 223.8ZM183.2 240.9L184.6 240.9L184.4 242.2L182.8 242.2ZM183.5 231.2L184.4 231.5L184.0 234.6L184.6 235.6L183.5 235.1ZM180.8 228.3L182.6 229.5L182.3 230.0ZM287.1 172.9L288.5 172.7L288.0 173.2ZM290.2 171.5L291.6 171.4L290.9 172.2ZM279.8 170.2L281.6 170.2L280.9 170.9ZM569.8 271.4L572.5 273.2L571.6 274.1L568.9 272.3ZM575.2 273.2L578.7 274.9L580.5 277.2L576.9 275.8ZM458.2 236.1L458.7 238.3L458.2 241.3L457.5 239.7L457.8 237.5ZM204.5 260.8L207.0 261.0L206.1 263.0L203.5 262.6ZM373.1 159.9L382.0 159.7L399.8 159.8L408.7 159.9L390.9 160.1ZM543.1 274.9L547.6 273.7L545.8 275.8ZM165.7 341.5L162.2 340.7L160.0 339.3L161.3 337.6L158.9 335.9L160.4 334.1ZM149.7 316.4L149.2 315.9ZM494.5 304.4L495.9 297.9L500.4 295.6L508.4 293.8L510.5 290.9L515.5 286.2L520.9 286.2L523.5 286.0L525.3 281.9L528.9 280.2L533.3 281.4L536.9 281.0L535.1 283.6L534.2 286.2L541.3 290.4L543.7 290.3L544.9 283.6L546.7 278.8L548.5 284.5L551.7 286.2L553.4 293.0L558.3 296.3L561.5 298.8L565.7 303.6L566.4 308.3L565.4 312.9L562.2 316.7L560.0 321.7L556.1 322.4L553.4 323.9L549.4 322.7L543.3 322.4L538.7 318.8L537.8 316.7L534.8 318.1L533.3 315.9L528.0 313.7L517.3 314.1L513.7 316.2L504.8 317.1L497.7 317.1L499.0 312.9L496.8 308.3ZM600.4 317.2L610.8 322.0L608.1 324.2L604.2 327.1L603.8 323.8L602.4 324.0ZM-27.4 361.9L-27.4 360.9L8.2 359.1L26.0 358.8L43.8 358.0L79.4 357.2L115.0 356.9L132.8 356.7L154.1 356.9L168.4 354.6L179.1 352.6L190.6 350.7L184.4 352.9L180.8 354.6L183.5 356.7L184.4 357.9L168.4 358.8L186.2 360.4L221.8 359.5L230.7 359.1L257.4 357.4L275.2 355.8L293.0 355.5L319.7 355.5L346.4 354.9L364.2 354.6L390.9 352.9L417.6 354.0L426.5 354.9L444.3 352.9L471.0 352.2L488.8 352.6L506.6 353.3L533.3 352.7L551.1 353.3L568.9 354.6L583.2 355.5L595.6 356.7L592.1 358.8L613.4 359.1L617.0 360.8L617.0 361.9Z" fill="#c91010" stroke="#000" stroke-width="0.9" stroke-linejoin="round"/>
<path d="M242.6 196.7h1.2M247.0 197.8h1.2M263.0 211.9h1.2M267.5 211.6h1.2M262.1 205.2h1.2M250.6 232.9h1.2M248.8 230.6h1.2M394.8 295.0h1.2M391.2 296.5h1.2M391.2 268.1h1.2M423.2 253.8h1.2M422.4 260.8h1.2M130.4 260.8h1.2M177.0 205.8h1.2M227.4 342.3h1.2M416.1 336.8h1.2M97.6 306.1h1.2M370.7 281.0h1.2M359.2 334.0h1.2M266.8 273.9h1.2M282.3 287.7h1.2M270.5 321.1h1.2M573.7 342.0h1.2M150.0 316.2h1.2M550.2 236.5h1.2M531.8 246.7h1.2M288.3 183.1h1.2M25.4 290.4h1.2M43.2 275.8h1.2" stroke="#000" stroke-width="0.9" fill="none"/>
<path d="M70.5 161.6L82.9 160.8L97.2 160.6L115.0 160.0L132.8 159.6L159.5 159.3L182.6 159.4L179.1 159.8L164.8 160.4L154.1 161.1L139.9 161.3L122.1 161.4L100.7 161.6L82.9 161.9ZM79.4 162.2L106.1 162.1L129.2 162.1L147.0 162.1L132.8 162.6L115.0 162.5L93.6 162.4ZM-6.1 163.8L8.2 164.0L26.0 164.1L43.8 164.4L61.6 164.2L43.8 164.0L17.1 163.7ZM88.3 161.1L106.1 160.8L118.5 160.6L104.3 160.7ZM159.5 160.2L171.9 159.9L182.6 159.7L168.4 160.0ZM139.9 163.5L154.1 163.2L164.8 164.0L150.6 164.0ZM115.0 163.5L123.9 163.1L132.8 163.4L122.1 163.8Z" fill="#b01010" stroke="#000" stroke-width="1.1" stroke-linejoin="round"/>
<path d="M399 165.5L398.4 170.2L396.1 174.8L396.7 177.2L400.2 179.5L401.9 180.9L394.3 180.4L385 180.1L378 181.8L376.3 183.6L379.2 185.9L380.9 188.8L379.8 192.3L373.3 191.2L365.2 188.8" fill="none" stroke="#000" stroke-width="0.9"/>
</g>
</svg>
<svg style="left:0;top:0" width="600" height="447">
<rect x="247.5" y="198.1" width="158.2" height="119.3" fill="none" stroke="#7588c4" stroke-width="0.85"/>
<g fill="#0f1238" stroke="#fff" stroke-width="0.35" stroke-opacity="0.6">
<rect x="245.8" y="196.3" width="3.5" height="3.5"/><rect x="324.9" y="196.3" width="3.5" height="3.5"/><rect x="404" y="196.3" width="3.5" height="3.5"/>
<rect x="245.8" y="256.4" width="3.5" height="3.5"/><rect x="404" y="256.4" width="3.5" height="3.5"/>
<rect x="245.8" y="315.7" width="3.5" height="3.5"/><rect x="324.9" y="315.7" width="3.5" height="3.5"/><rect x="404" y="315.7" width="3.5" height="3.5"/>
</g>
</svg>

<div class="a" style="left:0;top:82px;width:589px;height:9.5px;background:#fff"></div>
<div class="a" style="left:0;top:91px;width:9.3px;height:337px;background:#fff"></div>
<svg style="left:0;top:0;will-change:transform" width="600" height="447"><defs><clipPath id="hr"><rect x="9.5" y="82" width="577" height="9"/></clipPath><clipPath id="vr"><rect x="0" y="91.5" width="9" height="336"/></clipPath></defs><g clip-path="url(#hr)"><path d="M-27.7 82V91M-24.5 89.8V91M-21.3 89.8V91M-18.1 89.8V91M-14.9 89.8V91M-11.7 88.8V91M-8.5 89.8V91M-5.3 89.8V91M-2.1 89.8V91M1.1 89.8V91M4.4 82V91M7.6 89.8V91M10.8 89.8V91M14.0 89.8V91M17.2 89.8V91M20.4 88.8V91M23.6 89.8V91M26.8 89.8V91M30.0 89.8V91M33.2 89.8V91M36.4 82V91M39.6 89.8V91M42.8 89.8V91M46.0 89.8V91M49.2 89.8V91M52.4 88.8V91M55.6 89.8V91M58.8 89.8V91M62.0 89.8V91M65.2 89.8V91M68.5 82V91M71.7 89.8V91M74.9 89.8V91M78.1 89.8V91M81.3 89.8V91M84.5 88.8V91M87.7 89.8V91M90.9 89.8V91M94.1 89.8V91M97.3 89.8V91M100.5 82V91M103.7 89.8V91M106.9 89.8V91M110.1 89.8V91M113.3 89.8V91M116.5 88.8V91M119.7 89.8V91M122.9 89.8V91M126.1 89.8V91M129.3 89.8V91M132.6 82V91M135.8 89.8V91M139.0 89.8V91M142.2 89.8V91M145.4 89.8V91M148.6 88.8V91M151.8 89.8V91M155.0 89.8V91M158.2 89.8V91M161.4 89.8V91M164.6 82V91M167.8 89.8V91M171.0 89.8V91M174.2 89.8V91M177.4 89.8V91M180.6 88.8V91M183.8 89.8V91M187.0 89.8V91M190.2 89.8V91M193.4 89.8V91M196.7 82V91M199.9 89.8V91M203.1 89.8V91M206.3 89.8V91M209.5 89.8V91M212.7 88.8V91M215.9 89.8V91M219.1 89.8V91M222.3 89.8V91M225.5 89.8V91M228.7 82V91M231.9 89.8V91M235.1 89.8V91M238.3 89.8V91M241.5 89.8V91M244.7 88.8V91M247.9 89.8V91M251.1 89.8V91M254.3 89.8V91M257.5 89.8V91M260.8 82V91M264.0 89.8V91M267.2 89.8V91M270.4 89.8V91M273.6 89.8V91M276.8 88.8V91M280.0 89.8V91M283.2 89.8V91M286.4 89.8V91M289.6 89.8V91M292.8 82V91M296.0 89.8V91M299.2 89.8V91M302.4 89.8V91M305.6 89.8V91M308.8 88.8V91M312.0 89.8V91M315.2 89.8V91M318.4 89.8V91M321.6 89.8V91M324.9 82V91M328.1 89.8V91M331.3 89.8V91M334.5 89.8V91M337.7 89.8V91M340.9 88.8V91M344.1 89.8V91M347.3 89.8V91M350.5 89.8V91M353.7 89.8V91M356.9 82V91M360.1 89.8V91M363.3 89.8V91M366.5 89.8V91M369.7 89.8V91M372.9 88.8V91M376.1 89.8V91M379.3 89.8V91M382.5 89.8V91M385.7 89.8V91M388.9 82V91M392.2 89.8V91M395.4 89.8V91M398.6 89.8V91M401.8 89.8V91M405.0 88.8V91M408.2 89.8V91M411.4 89.8V91M414.6 89.8V91M417.8 89.8V91M421.0 82V91M424.2 89.8V91M427.4 89.8V91M430.6 89.8V91M433.8 89.8V91M437.0 88.8V91M440.2 89.8V91M443.4 89.8V91M446.6 89.8V91M449.8 89.8V91M453.1 82V91M456.3 89.8V91M459.5 89.8V91M462.7 89.8V91M465.9 89.8V91M469.1 88.8V91M472.3 89.8V91M475.5 89.8V91M478.7 89.8V91M481.9 89.8V91M485.1 82V91M488.3 89.8V91M491.5 89.8V91M494.7 89.8V91M497.9 89.8V91M501.1 88.8V91M504.3 89.8V91M507.5 89.8V91M510.7 89.8V91M513.9 89.8V91M517.1 82V91M520.4 89.8V91M523.6 89.8V91M526.8 89.8V91M530.0 89.8V91M533.2 88.8V91M536.4 89.8V91M539.6 89.8V91M542.8 89.8V91M546.0 89.8V91M549.2 82V91M552.4 89.8V91M555.6 89.8V91M558.8 89.8V91M562.0 89.8V91M565.2 88.8V91M568.4 89.8V91M571.6 89.8V91M574.8 89.8V91M578.0 89.8V91M581.2 82V91M584.5 89.8V91M587.7 89.8V91M590.9 89.8V91M594.1 89.8V91M597.3 88.8V91M600.5 89.8V91M603.7 89.8V91M606.9 89.8V91M610.1 89.8V91M613.3 82V91M616.5 89.8V91M619.7 89.8V91M622.9 89.8V91M626.1 89.8V91M629.3 88.8V91M632.5 89.8V91M635.7 89.8V91M638.9 89.8V91M642.1 89.8V91" stroke="#222" stroke-width="0.7"/><text x="-26.5" y="88.2" font-size="5.8" font-family="Liberation Sans" fill="#000" stroke="#000" stroke-width="0.12" textLength="27.9" lengthAdjust="spacingAndGlyphs">-20000000</text><text x="5.6" y="88.2" font-size="5.8" font-family="Liberation Sans" fill="#000" stroke="#000" stroke-width="0.12" textLength="27.9" lengthAdjust="spacingAndGlyphs">-18000000</text><text x="37.6" y="88.2" font-size="5.8" font-family="Liberation Sans" fill="#000" stroke="#000" stroke-width="0.12" textLength="27.9" lengthAdjust="spacingAndGlyphs">-16000000</text><text x="69.7" y="88.2" font-size="5.8" font-family="Liberation Sans" fill="#000" stroke="#000" stroke-width="0.12" textLength="27.9" lengthAdjust="spacingAndGlyphs">-14000000</text><text x="101.7" y="88.2" font-size="5.8" font-family="Liberation Sans" fill="#000" stroke="#000" stroke-width="0.12" textLength="27.9" lengthAdjust="spacingAndGlyphs">-12000000</text><text x="133.8" y="88.2" font-size="5.8" font-family="Liberation Sans" fill="#000" stroke="#000" stroke-width="0.12" textLength="27.9" lengthAdjust="spacingAndGlyphs">-10000000</text><text x="165.8" y="88.2" font-size="5.8" font-family="Liberation Sans" fill="#000" stroke="#000" stroke-width="0.12" textLength="24.8" lengthAdjust="spacingAndGlyphs">-8000000</text><text x="197.9" y="88.2" font-size="5.8" font-family="Liberation Sans" fill="#000" stroke="#000" stroke-width="0.12" textLength="24.8" lengthAdjust="spacingAndGlyphs">-6000000</text><text x="229.9" y="88.2" font-size="5.8" font-family="Liberation Sans" fill="#000" stroke="#000" stroke-width="0.12" textLength="24.8" lengthAdjust="spacingAndGlyphs">-4000000</text><text x="261.9" y="88.2" font-size="5.8" font-family="Liberation Sans" fill="#000" stroke="#000" stroke-width="0.12" textLength="24.8" lengthAdjust="spacingAndGlyphs">-2000000</text><text x="294.0" y="88.2" font-size="5.8" font-family="Liberation Sans" fill="#000" stroke="#000" stroke-width="0.12" textLength="3.1" lengthAdjust="spacingAndGlyphs">0</text><text x="326.1" y="88.2" font-size="5.8" font-family="Liberation Sans" fill="#000" stroke="#000" stroke-width="0.12" textLength="21.7" lengthAdjust="spacingAndGlyphs">2000000</text><text x="358.1" y="88.2" font-size="5.8" font-family="Liberation Sans" fill="#000" stroke="#000" stroke-width="0.12" textLength="21.7" lengthAdjust="spacingAndGlyphs">4000000</text><text x="390.1" y="88.2" font-size="5.8" font-family="Liberation Sans" fill="#000" stroke="#000" stroke-width="0.12" textLength="21.7" lengthAdjust="spacingAndGlyphs">6000000</text><text x="422.2" y="88.2" font-size="5.8" font-family="Liberation Sans" fill="#000" stroke="#000" stroke-width="0.12" textLength="21.7" lengthAdjust="spacingAndGlyphs">8000000</text><text x="454.2" y="88.2" font-size="5.8" font-family="Liberation Sans" fill="#000" stroke="#000" stroke-width="0.12" textLength="24.8" lengthAdjust="spacingAndGlyphs">10000000</text><text x="486.3" y="88.2" font-size="5.8" font-family="Liberation Sans" fill="#000" stroke="#000" stroke-width="0.12" textLength="24.8" lengthAdjust="spacingAndGlyphs">12000000</text><text x="518.4" y="88.2" font-size="5.8" font-family="Liberation Sans" fill="#000" stroke="#000" stroke-width="0.12" textLength="24.8" lengthAdjust="spacingAndGlyphs">14000000</text><text x="550.4" y="88.2" font-size="5.8" font-family="Liberation Sans" fill="#000" stroke="#000" stroke-width="0.12" textLength="24.8" lengthAdjust="spacingAndGlyphs">16000000</text><text x="582.5" y="88.2" font-size="5.8" font-family="Liberation Sans" fill="#000" stroke="#000" stroke-width="0.12" textLength="24.8" lengthAdjust="spacingAndGlyphs">18000000</text><text x="614.5" y="88.2" font-size="5.8" font-family="Liberation Sans" fill="#000" stroke="#000" stroke-width="0.12" textLength="24.8" lengthAdjust="spacingAndGlyphs">20000000</text></g><path d="M0 82.2H589M9 91.2H589" stroke="#6a6a6a" stroke-width="0.8"/><rect x="0" y="82.5" width="9" height="8.5" fill="#f2f2f2"/><text x="2.2" y="88.5" font-size="4.5" font-family="Liberation Sans" fill="#555">m</text><g clip-path="url(#vr)"><path d="M0 450.1H9M7.8 446.9H9M7.8 443.8H9M7.8 440.6H9M7.8 437.4H9M6.8 434.2H9M7.8 431.1H9M7.8 427.9H9M7.8 424.7H9M7.8 421.6H9M0 418.4H9M7.8 415.2H9M7.8 412.1H9M7.8 408.9H9M7.8 405.7H9M6.8 402.5H9M7.8 399.4H9M7.8 396.2H9M7.8 393.0H9M7.8 389.9H9M0 386.7H9M7.8 383.5H9M7.8 380.4H9M7.8 377.2H9M7.8 374.0H9M6.8 370.8H9M7.8 367.7H9M7.8 364.5H9M7.8 361.3H9M7.8 358.2H9M0 355.0H9M7.8 351.8H9M7.8 348.7H9M7.8 345.5H9M7.8 342.3H9M6.8 339.1H9M7.8 336.0H9M7.8 332.8H9M7.8 329.6H9M7.8 326.5H9M0 323.3H9M7.8 320.1H9M7.8 317.0H9M7.8 313.8H9M7.8 310.6H9M6.8 307.4H9M7.8 304.3H9M7.8 301.1H9M7.8 297.9H9M7.8 294.8H9M0 291.6H9M7.8 288.4H9M7.8 285.3H9M7.8 282.1H9M7.8 278.9H9M6.8 275.7H9M7.8 272.6H9M7.8 269.4H9M7.8 266.2H9M7.8 263.1H9M0 259.9H9M7.8 256.7H9M7.8 253.6H9M7.8 250.4H9M7.8 247.2H9M6.8 244.0H9M7.8 240.9H9M7.8 237.7H9M7.8 234.5H9M7.8 231.4H9M0 228.2H9M7.8 225.0H9M7.8 221.9H9M7.8 218.7H9M7.8 215.5H9M6.8 212.3H9M7.8 209.2H9M7.8 206.0H9M7.8 202.8H9M7.8 199.7H9M0 196.5H9M7.8 193.3H9M7.8 190.2H9M7.8 187.0H9M7.8 183.8H9M6.8 180.6H9M7.8 177.5H9M7.8 174.3H9M7.8 171.1H9M7.8 168.0H9M0 164.8H9M7.8 161.6H9M7.8 158.5H9M7.8 155.3H9M7.8 152.1H9M6.8 148.9H9M7.8 145.8H9M7.8 142.6H9M7.8 139.4H9M7.8 136.3H9M0 133.1H9M7.8 129.9H9M7.8 126.8H9M7.8 123.6H9M7.8 120.4H9M6.8 117.2H9M7.8 114.1H9M7.8 110.9H9M7.8 107.7H9M7.8 104.6H9M0 101.4H9M7.8 98.2H9M7.8 95.1H9M7.8 91.9H9M7.8 88.7H9M6.8 85.5H9M7.8 82.4H9M7.8 79.2H9M7.8 76.0H9M7.8 72.9H9M0 69.7H9M7.8 66.5H9M7.8 63.4H9M7.8 60.2H9M7.8 57.0H9M6.8 53.8H9M7.8 50.7H9M7.8 47.5H9M7.8 44.3H9M7.8 41.2H9M0 38.0H9M7.8 34.8H9M7.8 31.7H9M7.8 28.5H9M7.8 25.3H9M6.8 22.1H9M7.8 19.0H9M7.8 15.8H9M7.8 12.6H9M7.8 9.5H9" stroke="#222" stroke-width="0.7"/><text transform="translate(4.7,446.5) rotate(-90)" font-size="5.8" font-family="Liberation Sans" fill="#000" stroke="#000" stroke-width="0.12" textLength="27.9" lengthAdjust="spacingAndGlyphs">-12000000</text><text transform="translate(4.7,414.8) rotate(-90)" font-size="5.8" font-family="Liberation Sans" fill="#000" stroke="#000" stroke-width="0.12" textLength="27.9" lengthAdjust="spacingAndGlyphs">-10000000</text><text transform="translate(4.7,383.1) rotate(-90)" font-size="5.8" font-family="Liberation Sans" fill="#000" stroke="#000" stroke-width="0.12" textLength="24.8" lengthAdjust="spacingAndGlyphs">-8000000</text><text transform="translate(4.7,351.4) rotate(-90)" font-size="5.8" font-family="Liberation Sans" fill="#000" stroke="#000" stroke-width="0.12" textLength="24.8" lengthAdjust="spacingAndGlyphs">-6000000</text><text transform="translate(4.7,319.7) rotate(-90)" font-size="5.8" font-family="Liberation Sans" fill="#000" stroke="#000" stroke-width="0.12" textLength="24.8" lengthAdjust="spacingAndGlyphs">-4000000</text><text transform="translate(4.7,288.0) rotate(-90)" font-size="5.8" font-family="Liberation Sans" fill="#000" stroke="#000" stroke-width="0.12" textLength="24.8" lengthAdjust="spacingAndGlyphs">-2000000</text><text transform="translate(4.7,256.3) rotate(-90)" font-size="5.8" font-family="Liberation Sans" fill="#000" stroke="#000" stroke-width="0.12" textLength="3.1" lengthAdjust="spacingAndGlyphs">0</text><text transform="translate(4.7,224.6) rotate(-90)" font-size="5.8" font-family="Liberation Sans" fill="#000" stroke="#000" stroke-width="0.12" textLength="21.7" lengthAdjust="spacingAndGlyphs">2000000</text><text transform="translate(4.7,192.9) rotate(-90)" font-size="5.8" font-family="Liberation Sans" fill="#000" stroke="#000" stroke-width="0.12" textLength="21.7" lengthAdjust="spacingAndGlyphs">4000000</text><text transform="translate(4.7,161.2) rotate(-90)" font-size="5.8" font-family="Liberation Sans" fill="#000" stroke="#000" stroke-width="0.12" textLength="21.7" lengthAdjust="spacingAndGlyphs">6000000</text><text transform="translate(4.7,129.5) rotate(-90)" font-size="5.8" font-family="Liberation Sans" fill="#000" stroke="#000" stroke-width="0.12" textLength="21.7" lengthAdjust="spacingAndGlyphs">8000000</text><text transform="translate(4.7,97.8) rotate(-90)" font-size="5.8" font-family="Liberation Sans" fill="#000" stroke="#000" stroke-width="0.12" textLength="24.8" lengthAdjust="spacingAndGlyphs">10000000</text><text transform="translate(4.7,66.1) rotate(-90)" font-size="5.8" font-family="Liberation Sans" fill="#000" stroke="#000" stroke-width="0.12" textLength="24.8" lengthAdjust="spacingAndGlyphs">12000000</text><text transform="translate(4.7,34.4) rotate(-90)" font-size="5.8" font-family="Liberation Sans" fill="#000" stroke="#000" stroke-width="0.12" textLength="24.8" lengthAdjust="spacingAndGlyphs">14000000</text></g><path d="M9.2 82V428" stroke="#6a6a6a" stroke-width="0.8"/></svg>
<style>.vt{position:absolute;white-space:pre;line-height:1;font-size:7px;color:#000;transform-origin:0 0;-webkit-text-stroke:0.08px #000}</style>
<!-- vertical scrollbar -->
<div class="a" style="left:577px;top:91.5px;width:9.5px;height:337px;background:#ededed;border-left:0.6px solid #e0e0e0;box-sizing:border-box"></div>
<div class="a" style="left:576.5px;top:224.5px;width:9.5px;height:69px;background:#cdcdcd"></div>
<svg style="left:0;top:0" width="600" height="447">
<path d="M579.2 98.6L581.6 96.2L584 98.6" fill="none" stroke="#555" stroke-width="0.8"/>
<path d="M579.2 422.3L581.6 424.7L584 422.3" fill="none" stroke="#555" stroke-width="0.8"/>
</svg>
<!-- right tab panel -->
<div class="a" style="left:586.5px;top:82px;width:2.5px;height:356px;background:#f0f0f0"></div>
<div class="a" style="left:588.6px;top:82px;width:0.9px;height:356px;background:#7a7a7a"></div>
<div class="a" style="left:589.5px;top:82px;width:10.5px;height:356px;background:#f7f7f7"></div>
<div class="a" style="left:589.5px;top:82.7px;width:10.5px;height:68.8px;background:#d3e3f4"></div>
<div class="a" style="left:589.5px;top:275.5px;width:10.5px;height:0.7px;background:#bdbdbd"></div>
<div class="a" style="left:589.5px;top:363px;width:10.5px;height:0.7px;background:#bdbdbd"></div>
<div class="a" style="left:592.8px;top:365px;width:0.7px;height:72px;background:#cfcfcf"></div>
<div class="a" style="left:589.5px;top:437.3px;width:10.5px;height:0.7px;background:#8a8a8a"></div>
<div class="vt" style="left:599px;top:88px;transform:rotate(90deg) scaleX(0.99)">Canvas X Assistant</div>
<div class="vt" style="left:599px;top:159px;transform:rotate(90deg) scaleX(1.0)">Document Layout</div>
<div class="vt" style="left:599px;top:222.7px;transform:rotate(90deg) scaleX(1.05)">Page Navigator</div>
<div class="vt" style="left:599px;top:281px;transform:rotate(90deg) scaleX(1.03)">Flowchart</div>
<div class="vt" style="left:599px;top:320.4px;transform:rotate(90deg) scaleX(1.05)">Symbol Library</div>

<div class="a" style="left:19px;top:122.3px;width:36.5px;height:219px;background:#cfdff0;border:0.8px solid #7c8590;box-sizing:border-box"></div>
<div class="a" style="left:19.8px;top:123.1px;width:34.9px;height:13px;background:linear-gradient(#b9d0ea,#c3d7ee)"></div>
<div class="a" style="left:22px;top:137.5px;width:30.8px;height:201.5px;background:#f3f5f8"></div>
<div class="a" style="left:46px;top:127.4px;width:6px;height:5.2px;background:#d9434b;border-radius:0.6px"></div>
<svg style="left:0;top:0" width="600" height="447">
<path d="M47.8 128.8L50.2 131.2M50.2 128.8L47.8 131.2" stroke="#fff" stroke-width="0.7"/>
<rect x="23.7" y="139.2" width="13.3" height="12.6" fill="#cde2f7"/>
<!-- arrow -->
<path d="M28.8 142.3L28.8 148.6L30.3 147.2L31.4 149.6L32.3 149.2L31.3 146.8L33.2 146.6Z" fill="#1d1d1d"/>
<!-- T -->
<text x="40.2" y="150" font-family="Liberation Serif" font-weight="bold" font-size="10" fill="#333">T</text>
<!-- rect -->
<rect x="25" y="156.4" width="10.8" height="6.6" fill="#2c7fd6" stroke="#1f63b4" stroke-width="0.4"/>
<!-- line -->
<path d="M40.3 155.5L47.8 163.6" stroke="#333" stroke-width="0.9"/>
<!-- ellipse -->
<ellipse cx="30.4" cy="173.5" rx="5.5" ry="3.6" fill="#2c7fd6"/>
<!-- pen nib -->
<path d="M40.3 177.8L42 172.3L45.6 169.3L48.1 171.8L45.1 175.4Z" fill="#e9a93a" stroke="#8a5a1a" stroke-width="0.5"/>
<path d="M46 168.6L48.8 171.4" stroke="#333" stroke-width="1"/>
<!-- crop brush -->
<rect x="25.5" y="182.5" width="9.5" height="9.5" fill="none" stroke="#555" stroke-width="0.6" stroke-dasharray="0.9 0.7"/>
<path d="M26.5 191.5Q27 187 30.5 187.5L32 189Q31 192 26.5 191.5Z" fill="#d9823a"/>
<path d="M31 188L35 183.5" stroke="#2f66cc" stroke-width="1"/>
<!-- brush -->
<path d="M40 192Q40.5 188 43.5 188L44.8 189.3Q44.5 192.3 40 192Z" fill="#d9823a"/>
<path d="M44.3 188.5L48.3 183" stroke="#2f66cc" stroke-width="1.1"/>
<!-- eyedroppers -->
<path d="M25.8 205.5L31.5 199.5" stroke="#777" stroke-width="1"/><path d="M31 197L34 200L32.5 201.5L29.5 198.5Z" fill="#c8823c"/><path d="M32.5 196L35 198.5" stroke="#555" stroke-width="1.3"/>
<path d="M39.5 205.5L45 199.5" stroke="#c88a4a" stroke-width="1"/><path d="M44.5 197L47.5 200L46 201.5L43 198.5Z" fill="#c8823c"/><path d="M46 196L48.5 198.5" stroke="#555" stroke-width="1.3"/><path d="M40 206.3H48" stroke="#e89850" stroke-width="0.8"/>
<!-- dimension -->
<path d="M27 210L33 217M25.5 211.5L28.5 208.5M31.5 218.5L34.5 215.5" stroke="#3d6fc0" stroke-width="0.9"/>
<rect x="39.5" y="213" width="7" height="4.5" fill="#2c7fd6"/><path d="M45.5 213.5L48.5 210.5" stroke="#555" stroke-width="0.6"/>
<!-- marker -->
<path d="M26 228.5L31.5 222.5L34 225L28.5 231Z" fill="#2c7fd6"/><path d="M31.5 222.5L33 221L35.5 223.5L34 225Z" fill="#1a4a90"/><path d="M25.5 232.5H34.5" stroke="#e8803a" stroke-width="1.1"/>
<!-- ghost -->
<path d="M40 232V225A4 4 0 0 1 48 225V232L46.5 231L45 232.3L43.5 231L42 232.3Z" fill="#2c7fd6"/><circle cx="42.7" cy="225.5" r="0.9" fill="#fff"/><circle cx="45.3" cy="225.5" r="0.9" fill="#fff"/>
<!-- knife -->
<path d="M25.5 245L33.5 237.5L35.5 239.5L27.5 246.5Z" fill="#e8b838"/><path d="M25.5 245L27.5 246.5L25 247Z" fill="#999"/><circle cx="31" cy="241" r="0.7" fill="#333"/>
<!-- arrow circle -->
<circle cx="45.5" cy="243.5" r="3.4" fill="#e6f0fa" stroke="#5a90d8" stroke-width="0.7"/><path d="M39.5 236.5L44.5 242.5" stroke="#555" stroke-width="0.6"/><path d="M39.3 236.3L40.8 236.8L39.8 237.8Z" fill="#333"/>
<!-- image tools -->
<path d="M25.5 259V250.5Q27 249 28.5 250.5V252H34V259Z" fill="#fff" stroke="#2c7fd6" stroke-width="0.8"/><path d="M25 259.3H35" stroke="#2c7fd6" stroke-width="1"/><path d="M28 257Q30 252 33 251" fill="none" stroke="#2c7fd6" stroke-width="0.7"/>
<rect x="40" y="250.5" width="8" height="7.5" rx="1" fill="#555"/><rect x="41" y="251.5" width="3" height="3" fill="#e05a3a"/><rect x="44" y="251.5" width="3" height="3" fill="#3a8ad8"/><rect x="41" y="254.5" width="3" height="3" fill="#5ab83a"/><rect x="44" y="254.5" width="3" height="3" fill="#e8c83a"/>
<!-- hand -->
<path d="M26.5 267.5Q25.5 265 27 264.5L28.5 266V262Q29.2 261 30 262V265V261.5Q30.8 260.5 31.6 261.5V265V262.3Q32.4 261.5 33.2 262.5V266.5Q33.5 270.5 30.5 271.5Q28 271.5 26.5 267.5Z" fill="#f0b8a0" stroke="#d09080" stroke-width="0.4"/>
<!-- zoom -->
<circle cx="43.8" cy="266.5" r="3.3" fill="#dbe9f8" stroke="#3a7fd0" stroke-width="0.8"/><path d="M46.2 268.9L48.8 271.5" stroke="#666" stroke-width="1.1"/>
<!-- separator -->
<path d="M24 275.6H51" stroke="#d0d0d0" stroke-width="0.6" stroke-dasharray="1 0.5"/>
<!-- no sign -->
<circle cx="37.1" cy="281.2" r="2.6" fill="none" stroke="#2c6fd0" stroke-width="0.9"/><path d="M35.3 279.4L38.9 283" stroke="#2c6fd0" stroke-width="0.9"/>
<!-- dashes -->
<path d="M27.8 290.3H46" stroke="#222" stroke-width="1.3" stroke-dasharray="2.8 1.8"/>
<!-- arrows line -->
<path d="M29 302H45" stroke="#333" stroke-width="0.9"/><path d="M28 302L31 300.3V303.7Z M46 302L43 300.3V303.7Z" fill="#333"/><circle cx="37" cy="302" r="1.1" fill="#f3f5f8" stroke="#333" stroke-width="0.7"/>
<!-- pen + black swatch -->
<path d="M25 319L29.5 313L32 315L27.5 320Z" fill="#fff" stroke="#555" stroke-width="0.6"/><path d="M29.5 313L31 311.5L33.3 313.5L32 315Z" fill="#666"/><path d="M24.8 320.6H31" stroke="#3a7fd0" stroke-width="0.8"/>
<rect x="36.3" y="310.9" width="12.3" height="9.3" fill="#0a0a0a"/>
<!-- bucket + white swatch -->
<path d="M24.5 329L28.5 325L32.5 329L28.5 333Z" fill="#35404e"/><path d="M27.5 325Q27 322.5 29 322.5Q30.5 322.8 30 325" fill="none" stroke="#555" stroke-width="0.6"/><rect x="32.5" y="329.5" width="1.4" height="3.2" fill="#e8802a"/>
<rect x="36.3" y="324.3" width="12.3" height="10" fill="#fbfbfb" stroke="#e0e0e0" stroke-width="0.5"/>
</svg>

<style>.st{position:absolute;white-space:pre;line-height:1;font-size:6.1px;color:#000;transform-origin:0 0;-webkit-text-stroke:0.05px #000}</style>
<!-- bottom bar -->
<div class="a" style="left:0;top:428px;width:577px;height:10px;background:#f2f2f2"></div>
<div class="a" style="left:171px;top:428px;width:39.5px;height:10px;background:#fbfbfb"></div>
<div class="a" style="left:210.5px;top:427.8px;width:53.5px;height:10px;background:#f1f1f1;border:0.6px solid #d2d2d2;border-bottom:0;box-sizing:border-box;border-radius:1px 1px 0 0"></div>
<div class="a" style="left:264px;top:428px;width:2.7px;height:10px;background:#d9d9d9"></div>
<div class="a" style="left:266.7px;top:428.5px;width:305.3px;height:9.3px;background:#ececec"></div>
<div class="a" style="left:375px;top:429px;width:92px;height:8.5px;background:#cdcdcd"></div>
<div class="a" style="left:577px;top:428px;width:11.5px;height:10px;background:#ededed"></div>
<div class="a" style="left:10.8px;top:429px;width:37.5px;height:8.6px;background:#fff;border:0.7px solid #bdbdbd;box-sizing:border-box"></div>
<div class="a" style="left:85.3px;top:429px;width:40.5px;height:8.6px;background:#fff;border:0.7px solid #bdbdbd;box-sizing:border-box"></div>
<div class="st" style="left:13.3px;top:430.6px;font-size:6px">200.0%</div>
<div class="st" style="left:87.5px;top:430.6px;font-size:6px">Sheet #1</div>
<div class="st" style="left:177.8px;top:429.2px;font-size:6px;color:#222;-webkit-text-stroke:0;transform:scaleX(1.1)">world-co...</div>
<svg style="left:0;top:0" width="600" height="447">
<path d="M171.5 438L175 428.4H210.5V438" fill="none" stroke="#bdbdbd" stroke-width="0.6"/>
<path d="M42.5 432L44.2 433.7L45.9 432M119.5 432L121.2 433.7L122.9 432" fill="none" stroke="#666" stroke-width="0.7"/>
<!-- magnifiers -->
<circle cx="5" cy="432" r="2" fill="none" stroke="#555" stroke-width="0.7"/><path d="M6.5 433.5L8 435M3.8 432H6.2" stroke="#555" stroke-width="0.7"/>
<circle cx="53" cy="432" r="2" fill="none" stroke="#555" stroke-width="0.7"/><path d="M54.5 433.5L56 435M51.8 432H54.2M53 430.8V433.2" stroke="#555" stroke-width="0.7"/>
<!-- page -->
<path d="M62.3 429.5H66L67.8 431.3V436.5H62.3Z" fill="#fff" stroke="#444" stroke-width="0.7"/>
<path d="M75 430.2L72.5 433L75 435.8ZM72.5 430.2L70 433L72.5 435.8Z" fill="#333"/>
<path d="M79 430.2L81.5 433L79 435.8ZM81.5 430.2L84 433L81.5 435.8Z" fill="#333"/>
<!-- page icon -->
<path d="M129.5 430H133L134.5 431.5V436H129.5Z" fill="#ddd" stroke="#666" stroke-width="0.6"/><path d="M131.5 431.5H135L136.5 433V437.2H131.5Z" fill="#eee" stroke="#666" stroke-width="0.6"/>
<path d="M139 430.2V435.8" stroke="#333" stroke-width="0.9"/><path d="M142.8 430.2L139.8 433L142.8 435.8Z" fill="#333"/>
<path d="M150.5 430.2L147.5 433L150.5 435.8Z" fill="#333"/>
<path d="M156 430.2L159 433L156 435.8Z" fill="#333"/>
<path d="M164 430.2L167 433L164 435.8Z" fill="#333"/><path d="M167.6 430.2V435.8" stroke="#333" stroke-width="0.9"/>
<path d="M272.5 431.3L270.8 433L272.5 434.7" fill="none" stroke="#333" stroke-width="0.7"/>
<path d="M571 431.3L572.7 433L571 434.7" fill="none" stroke="#333" stroke-width="0.7"/>
<path d="M579 437L587 429.5M582 437.5L587.5 432.3" stroke="#999" stroke-width="0.6"/>
</svg>
<!-- status bar -->
<div class="a" style="left:0;top:438px;width:600px;height:9px;background:#f0f0f0;border-top:0.6px solid #d8d8d8;box-sizing:border-box"></div>
<div class="a" style="left:99.5px;top:438.6px;width:0.6px;height:8.4px;background:#d0d0d0"></div>
<div class="a" style="left:199.5px;top:438.6px;width:0.6px;height:8.4px;background:#d0d0d0"></div>
<div class="a" style="left:299.5px;top:438.6px;width:0.6px;height:8.4px;background:#d0d0d0"></div>
<div class="a" style="left:399.5px;top:438.6px;width:0.6px;height:8.4px;background:#d0d0d0"></div>
<div class="a" style="left:499.5px;top:438.6px;width:0.6px;height:8.4px;background:#d0d0d0"></div>
<div class="st" style="left:101.7px;top:440.3px;transform:scaleX(0.94)">X: 1618266.671 m Y: 15247394.22...</div>
<div class="st" style="left:201.7px;top:440.3px;transform:scaleX(0.92)">Name: &lt;none&gt;</div>
<div class="st" style="left:255.8px;top:440.3px">#: 57</div>
<div class="st" style="left:282.5px;top:440.3px;transform:scaleX(1.15)">wor...</div>
<div class="st" style="left:301.7px;top:440.3px;transform:scaleX(0.94)">Group of 55 objects</div>
<div class="st" style="left:412.5px;top:440.3px;transform:scaleX(0.92)">-2818918.326 m, 3854821.556 m</div>
<div class="st" style="left:501.5px;top:440.3px;transform:scaleX(0.94)">No image edit data</div>
<svg style="left:0;top:0" width="600" height="447">
<rect x="273.5" y="440" width="5.5" height="5.5" fill="#666"/><rect x="274.5" y="439.3" width="4" height="1" fill="#999"/>
<path d="M354.5 439.8L359.5 446M362.8 439.8L367.8 446" stroke="#111" stroke-width="1.1"/>
<rect x="402.8" y="440.3" width="6.8" height="5" fill="#fff" stroke="#557" stroke-width="0.6"/>
<path d="M498.3 440V446" stroke="#444" stroke-width="0.5"/>
</svg>

</body></html>
